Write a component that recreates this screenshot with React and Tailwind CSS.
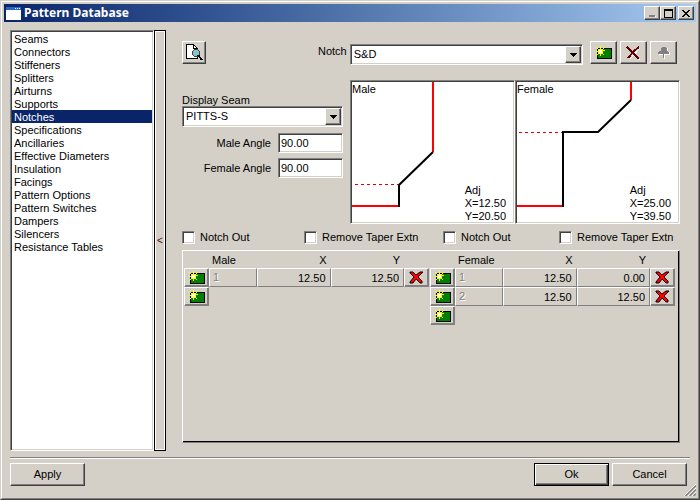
import { useState } from "react";

const SECTIONS = [
  "Seams", "Connectors", "Stiffeners", "Splitters", "Airturns", "Supports",
  "Notches", "Specifications", "Ancillaries", "Effective Diameters",
  "Insulation", "Facings", "Pattern Options", "Pattern Switches", "Dampers",
  "Silencers", "Resistance Tables",
];

const MALE_ROWS = [{ x: "12.50", y: "12.50" }];
const FEMALE_ROWS = [{ x: "12.50", y: "0.00" }, { x: "12.50", y: "12.50" }];

// ─── Bevels ───────────────────────────────────────────────────────────────────
const RAISED =
  "bg-[#d4d0c8] border border-t-white border-l-white border-r-[#404040] border-b-[#404040] shadow-[inset_-1px_-1px_0_#808080]";
const SUNKEN =
  "border border-t-[#808080] border-l-[#808080] border-r-white border-b-white shadow-[inset_1px_1px_0_#404040,inset_-1px_-1px_0_#d4d0c8]";

// ─── Icons ────────────────────────────────────────────────────────────────────
function NewIcon() {
  return (
    <svg width="16" height="13" viewBox="0 0 16 13" shapeRendering="crispEdges" aria-hidden="true">
      <rect x="1" y="2" width="15" height="11" fill="#000" />
      <rect x="2" y="3" width="13" height="9" fill="#008000" />
      <path fill="#ff0" d="M4 0h1v3h-1zM0 1h1v1h-1zM1 2h1v1h-1zM8 1h1v1h-1zM7 2h1v1h-1zM2 3h5v5h-5zM0 5h2v1h-2zM7 4h2v1h-2zM1 8h1v1h-1zM0 9h1v1h-1zM4 8h1v2h-1zM7 8h1v1h-1z" />
      <path fill="#fff" d="M3 4h3v3h-3z" />
    </svg>
  );
}

function DeleteIcon({ dark }) {
  if (dark) {
    return (
      <svg width="15" height="14" viewBox="0 0 15 14" shapeRendering="crispEdges" aria-hidden="true">
        <path d="M3 2 L14 14 M14 2 L4 13" stroke="#fff" strokeWidth="1" />
        <path d="M1 1 L13 13" stroke="#600000" strokeWidth="2" />
        <path d="M13 1 L8 5 L2 12" stroke="#600000" strokeWidth="2" fill="none" />
      </svg>
    );
  }
  return (
    <svg width="15" height="13" viewBox="0 0 15 13" aria-hidden="true">
      <path
        d="M1 1 H4 L7 4 L11 1 H14 L9 6 L13 10 V12 H11 L7 8 L4 12 H1 V11 L5 6 L1 2 Z"
        fill="#f00"
        stroke="#000"
        strokeWidth="1"
      />
    </svg>
  );
}

function PinIcon() {
  return (
    <svg width="14" height="13" viewBox="0 0 14 13" shapeRendering="crispEdges" aria-hidden="true">
      <path fill="#fff" d="M5 2h6v4h2v3h-5v4h-1v-4h-5v-1h3z" />
      <path fill="#808080" d="M5 1h4v1h1v3h1v1h1v2h-5v4h-1v-4h-5v-2h1v-1h2v-3h1z" />
    </svg>
  );
}

function PreviewIcon() {
  return (
    <svg width="18" height="17" viewBox="0 0 18 17" shapeRendering="crispEdges" aria-hidden="true">
      <path d="M1.500 .500 H8.500 L12.500 4.500 V14.500 H1.500 Z" fill="#fff" stroke="#000" />
      <path d="M8.500 .500 V4.500 H12.500" fill="none" stroke="#000" />
      <circle cx="11" cy="9" r="3.500" fill="#9bb" stroke="#404040" />
      <path d="M9 7h2v1h-2zM9 9h1v1h-1zM12 10h1v1h-1zM11 11h1v1h-1z" fill="#0ff" />
      <path d="M13 11 L17 16" stroke="#000" strokeWidth="2" />
    </svg>
  );
}

// ─── Controls ─────────────────────────────────────────────────────────────────
function DropDown({ id, value }) {
  return (
    <div className={`relative h-[21px] w-full bg-white ${SUNKEN}`}>
      <select id={id} defaultValue={value} className="block h-full w-full appearance-none bg-transparent pl-[3px] pr-5 outline-none">
        <option>{value}</option>
      </select>
      <span className={`pointer-events-none absolute top-px right-px bottom-px flex w-4 items-center justify-center ${RAISED}`}>
        <svg width="7" height="4" viewBox="0 0 7 4" shapeRendering="crispEdges" aria-hidden="true">
          <path d="M0 0h7v1h-1v1h-1v1h-1v1h-1v-1h-1v-1h-1v-1h-1z" />
        </svg>
      </span>
    </div>
  );
}

function AngleField({ id, label, value }) {
  return (
    <div className="flex items-center justify-end gap-[7px]">
      <label htmlFor={id}>{label}</label>
      <input id={id} defaultValue={value} className={`h-5 w-[65px] bg-white px-[2px] outline-none ${SUNKEN}`} />
    </div>
  );
}

function Check({ label }) {
  return (
    <label className="flex items-center gap-[5px] whitespace-nowrap">
      <input type="checkbox" className={`size-[13px] shrink-0 appearance-none bg-white checked:bg-[#404040] ${SUNKEN}`} />
      {label}
    </label>
  );
}

function ToolButton({ title, children, disabled }) {
  return (
    <button title={title} disabled={disabled} className={`flex h-[23px] w-[27px] items-center justify-center ${RAISED}`}>
      {children}
    </button>
  );
}

function Drawing({ title, x, y, children }) {
  return (
    <div className={`relative h-36 overflow-hidden bg-white p-px ${SUNKEN}`}>
      <svg width="161" height="140" viewBox="0 0 161 140" fill="none" className="block" aria-hidden="true">
        {children}
      </svg>
      <span className="absolute top-[2px] left-px">{title}</span>
      <div className="absolute right-2 bottom-0">
        <div>Adj</div>
        <div>X={x}</div>
        <div>Y={y}</div>
      </div>
    </div>
  );
}

function CellButton({ title, children }) {
  return (
    <button
      title={title}
      className="flex h-[19px] w-full items-center justify-center border border-t-white border-l-white border-r-[#808080] border-b-[#808080] shadow-[inset_-1px_-1px_0_#808080]"
    >
      {children}
    </button>
  );
}

function NotchTable({ name, rows }) {
  const cell = "border border-t-white border-l-white border-r-[#808080] border-b-[#808080] p-0";
  const field = "block h-[17px] w-full bg-transparent pr-1 text-right outline-none";
  return (
    <table className="w-full flex-1 table-fixed border-separate border-spacing-0">
      <colgroup>
        <col className="w-[25px]" />
        <col className="w-12" />
        <col />
        <col />
        <col className="w-[25px]" />
      </colgroup>
      <thead>
        <tr className="h-[17px]">
          <td className="p-0" />
          <th className="p-0 pt-px pl-[3px] text-left font-normal">{name}</th>
          <th className="p-0 pt-px pr-1 text-right font-normal">X</th>
          <th className="p-0 pt-px pr-1 text-right font-normal">Y</th>
          <td className="p-0" />
        </tr>
      </thead>
      <tbody>
        {rows.map((row, i) => (
          <tr key={i} className="h-[19px]">
            <td className="p-0"><CellButton title="Insert"><NewIcon /></CellButton></td>
            <td className={`${cell} text-[#808080]`}>
              <span className="block pl-[3px] [text-shadow:1px_1px_0_#fff]">{i + 1}</span>
            </td>
            <td className={cell}><input aria-label={`${name} ${i + 1} X`} defaultValue={row.x} className={field} /></td>
            <td className={cell}><input aria-label={`${name} ${i + 1} Y`} defaultValue={row.y} className={field} /></td>
            <td className="p-0"><CellButton title="Delete"><DeleteIcon /></CellButton></td>
          </tr>
        ))}
        <tr className="h-[19px]">
          <td className="p-0"><CellButton title="Insert"><NewIcon /></CellButton></td>
          <td colSpan={4} />
        </tr>
      </tbody>
    </table>
  );
}

function TitleBar() {
  const btn = `flex h-[14px] w-4 items-center justify-center ${RAISED}`;
  return (
    <header className="flex h-[18px] items-center bg-linear-to-r from-[#0a246a] to-[#a6caf0] px-[2px]">
      <svg width="15" height="13" viewBox="0 0 15 13" shapeRendering="crispEdges" aria-hidden="true">
        <rect width="15" height="13" fill="#fff" />
        <rect width="15" height="3" fill="#2a66c8" />
        <path d="M9 1h1v1h-1zM11 1h1v1h-1zM13 1h1v1h-1z" fill="#fff" />
      </svg>
      <h1 className="ml-[3px] flex-1 font-['Noto_Sans',sans-serif] text-[12px] leading-4 font-bold text-white">Pattern Database</h1>
      <button title="Minimize" disabled className={btn}>
        <svg width="8" height="8" viewBox="0 0 8 8" shapeRendering="crispEdges" aria-hidden="true">
          <path d="M1 6h6v2h-6z" fill="#808080" />
          <path d="M7 7h1v1h-1z" fill="#fff" />
        </svg>
      </button>
      <button title="Maximize" className={btn}>
        <svg width="9" height="9" viewBox="0 0 9 9" shapeRendering="crispEdges" aria-hidden="true">
          <path d="M0 0h9v9h-9zM1 2v6h7v-6z" fillRule="evenodd" />
        </svg>
      </button>
      <button title="Close" className={`ml-[2px] ${btn}`}>
        <svg width="8" height="7" viewBox="0 0 8 7" shapeRendering="crispEdges" aria-hidden="true">
          <path d="M0 0h2v1h1v1h2v-1h1v-1h2v1h-1v1h-1v1h-1v1h1v1h1v1h1v1h-2v-1h-1v-1h-2v1h-1v1h-2v-1h1v-1h1v-1h1v-1h-1v-1h-1v-1h-1z" />
        </svg>
      </button>
    </header>
  );
}

export default function App() {
  const [section, setSection] = useState("Notches");

  return (
    <div className="flex min-h-screen border border-t-[#d4d0c8] border-l-[#d4d0c8] border-r-[#404040] border-b-[#404040] bg-[#d4d0c8] font-['Liberation_Sans',sans-serif] text-[11px] leading-[13px] text-black">
      <div className="relative flex min-w-0 flex-1 flex-col border border-t-white border-l-white border-r-[#808080] border-b-[#808080] p-[2px]">
        <TitleBar />

        <main className="flex flex-1 px-1.5 pt-2">
          {/* Section list */}
          <ul className={`w-36 shrink-0 bg-white p-px ${SUNKEN}`}>
            {SECTIONS.map((s) => (
              <li key={s}>
                <button
                  onClick={() => setSection(s)}
                  className={`block w-full pt-px pl-[2px] text-left leading-3 ${s === section ? "bg-[#0a246a] text-white" : ""}`}
                >
                  {s}
                </button>
              </li>
            ))}
          </ul>
          <button title="Hide list" className="w-3 shrink-0 border border-black text-center text-[10px] text-[#600000] shadow-[inset_1px_1px_0_#fff,inset_-1px_-1px_0_#fff]">
            &lt;
          </button>

          <section className="flex min-w-0 flex-1 flex-col pt-[11px] pr-2.5 pb-2 pl-4">
            {/* Toolbar */}
            <div className="flex h-6 items-start pr-[3px]">
              <button title="Preview" className={`flex h-[23px] w-6 items-center justify-center ${RAISED}`}>
                <PreviewIcon />
              </button>
              <label htmlFor="notch" className="ml-28 pt-1">Notch</label>
              <div className="ml-[3px] flex-1 self-end">
                <DropDown id="notch" value="S&D" />
              </div>
              <div className="ml-[7px] flex gap-[3px]">
                <ToolButton title="New notch"><NewIcon /></ToolButton>
                <ToolButton title="Delete notch"><DeleteIcon dark /></ToolButton>
                <ToolButton title="Pin" disabled><PinIcon /></ToolButton>
              </div>
            </div>

            {/* Seam settings and drawings */}
            <div className="mt-[15px] flex gap-[7px]">
              <div className="w-[161px] shrink-0 pt-[13px]">
                <label htmlFor="seam" className="block pt-px leading-3">Display Seam</label>
                <DropDown id="seam" value="PITTS-S" />
                <div className="mt-1.5 flex flex-col gap-[5px]">
                  <AngleField id="male-angle" label="Male Angle" value="90.00" />
                  <AngleField id="female-angle" label="Female Angle" value="90.00" />
                </div>
              </div>
              <div className="grid flex-1 grid-cols-2">
                <Drawing title="Male" x="12.50" y="20.50">
                  <path d="M3 102.500H46" stroke="#d00" strokeDasharray="3 3" />
                  <path d="M81 0V70M0 124H47" stroke="#f00" strokeWidth="2" />
                  <path d="M81 70L47 103V125" stroke="#000" strokeWidth="2" />
                </Drawing>
                <Drawing title="Female" x="25.00" y="39.50">
                  <path d="M2 50.500H46" stroke="#d00" strokeDasharray="3 3" />
                  <path d="M114 0V18M0 124H46" stroke="#f00" strokeWidth="2" />
                  <path d="M114 18L81 50H46V125" stroke="#000" strokeWidth="2" />
                </Drawing>
              </div>
            </div>

            <div className="mt-[7px] grid grid-cols-[122fr_139fr_116fr_121fr]">
              <Check label="Notch Out" />
              <Check label="Remove Taper Extn" />
              <Check label="Notch Out" />
              <Check label="Remove Taper Extn" />
            </div>

            {/* Point tables */}
            <div className="mt-1.5 flex flex-1 items-start gap-px border border-t-white border-l-white border-r-[#808080] border-b-[#808080] pr-1 pl-px shadow-[inset_-1px_-1px_0_#000]">
              <NotchTable name="Male" rows={MALE_ROWS} />
              <NotchTable name="Female" rows={FEMALE_ROWS} />
            </div>
          </section>
        </main>

        <footer className="px-1.5 pb-2.5">
          <div className="mt-1.5 h-[2px] border-t border-b border-t-[#808080] border-b-white" />
          <div className="mt-1 flex gap-[3px] pr-[3px]">
            <button className={`mr-auto h-[23px] w-[75px] ${RAISED}`}>Apply</button>
            <button className="h-[23px] w-[75px] border border-black shadow-[inset_1px_1px_0_#fff,inset_-1px_-1px_0_#404040,inset_-2px_-2px_0_#808080]">Ok</button>
            <button className={`h-[23px] w-[75px] ${RAISED}`}>Cancel</button>
          </div>
        </footer>

        {/* Resize grip */}
        <svg width="12" height="12" viewBox="0 0 12 12" className="absolute right-[2px] bottom-[2px]" aria-hidden="true">
          <path d="M0 12L12 0M4 12L12 4M8 12L12 8" stroke="#fff" />
          <path d="M1.500 12L12 1.500M5.500 12L12 5.500M9.500 12L12 9.500" stroke="#808080" strokeWidth="1.500" />
        </svg>
      </div>
    </div>
  );
}
